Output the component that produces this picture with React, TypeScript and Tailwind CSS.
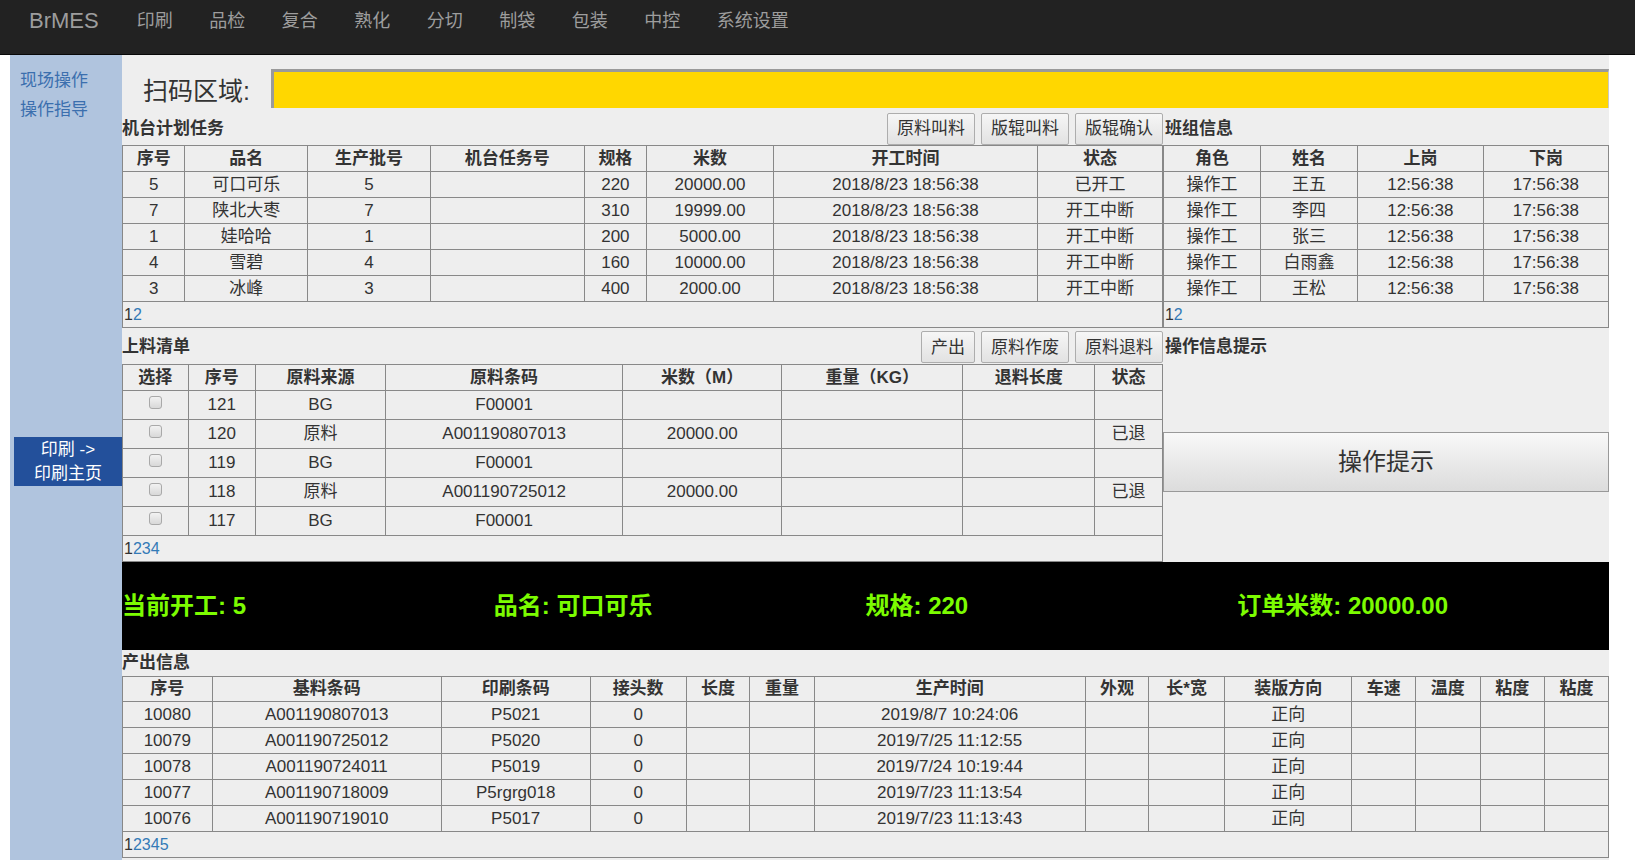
import React from "react";

const navItems = ["印刷", "品检", "复合", "熟化", "分切", "制袋", "包装", "中控", "系统设置"];

const planCols = [
  { label: "序号", w: "w-[6%]" },
  { label: "品名", w: "w-[11.8%]" },
  { label: "生产批号", w: "w-[11.8%]" },
  { label: "机台任务号", w: "w-[14.8%]" },
  { label: "规格", w: "w-[6%]" },
  { label: "米数", w: "w-[12.2%]" },
  { label: "开工时间", w: "w-[25.4%]" },
  { label: "状态", w: "w-[12%]" },
];

const planRows = [
  ["5", "可口可乐", "5", "", "220", "20000.00", "2018/8/23 18:56:38", "已开工"],
  ["7", "陕北大枣", "7", "", "310", "19999.00", "2018/8/23 18:56:38", "开工中断"],
  ["1", "娃哈哈", "1", "", "200", "5000.00", "2018/8/23 18:56:38", "开工中断"],
  ["4", "雪碧", "4", "", "160", "10000.00", "2018/8/23 18:56:38", "开工中断"],
  ["3", "冰峰", "3", "", "400", "2000.00", "2018/8/23 18:56:38", "开工中断"],
];

const teamCols = [
  { label: "角色", w: "w-[21.8%]" },
  { label: "姓名", w: "w-[21.8%]" },
  { label: "上岗", w: "w-[28.3%]" },
  { label: "下岗", w: "w-[28.1%]" },
];

const teamRows = [
  ["操作工", "王五", "12:56:38", "17:56:38"],
  ["操作工", "李四", "12:56:38", "17:56:38"],
  ["操作工", "张三", "12:56:38", "17:56:38"],
  ["操作工", "白雨鑫", "12:56:38", "17:56:38"],
  ["操作工", "王松", "12:56:38", "17:56:38"],
];

const feedCols = [
  { label: "选择", w: "w-[6.3%]" },
  { label: "序号", w: "w-[6.5%]" },
  { label: "原料来源", w: "w-[12.5%]" },
  { label: "原料条码", w: "w-[22.8%]" },
  { label: "米数（M）", w: "w-[15.3%]" },
  { label: "重量（KG）", w: "w-[17.4%]" },
  { label: "退料长度", w: "w-[12.7%]" },
  { label: "状态", w: "w-[6.5%]" },
];

const feedRows = [
  ["121", "BG", "F00001", "", "", "", ""],
  ["120", "原料", "A001190807013", "20000.00", "", "", "已退"],
  ["119", "BG", "F00001", "", "", "", ""],
  ["118", "原料", "A001190725012", "20000.00", "", "", "已退"],
  ["117", "BG", "F00001", "", "", "", ""],
];

const outCols = [
  { label: "序号", w: "w-[6.03%]" },
  { label: "基料条码", w: "w-[15.42%]" },
  { label: "印刷条码", w: "w-[10.02%]" },
  { label: "接头数", w: "w-[6.46%]" },
  { label: "长度", w: "w-[4.28%]" },
  { label: "重量", w: "w-[4.34%]" },
  { label: "生产时间", w: "w-[18.23%]" },
  { label: "外观", w: "w-[4.28%]" },
  { label: "长*宽", w: "w-[5.11%]" },
  { label: "装版方向", w: "w-[8.57%]" },
  { label: "车速", w: "w-[4.28%]" },
  { label: "温度", w: "w-[4.34%]" },
  { label: "粘度", w: "w-[4.35%]" },
  { label: "粘度", w: "w-[4.29%]" },
];

const outRows = [
  ["10080", "A001190807013", "P5021", "0", "", "", "2019/8/7 10:24:06", "", "", "正向", "", "", "", ""],
  ["10079", "A001190725012", "P5020", "0", "", "", "2019/7/25 11:12:55", "", "", "正向", "", "", "", ""],
  ["10078", "A001190724011", "P5019", "0", "", "", "2019/7/24 10:19:44", "", "", "正向", "", "", "", ""],
  ["10077", "A001190718009", "P5rgrg018", "0", "", "", "2019/7/23 11:13:54", "", "", "正向", "", "", "", ""],
  ["10076", "A001190719010", "P5017", "0", "", "", "2019/7/23 11:13:43", "", "", "正向", "", "", "", ""],
];

const thCls = "border border-[#888] p-0 h-[25px] text-center font-bold leading-[22px]";
const tdCls = "border border-[#888] p-0 text-center leading-[22px]";

function Pager({ pages, span }: { pages: number; span: number }) {
  return (
    <tr>
      <td colSpan={span} className="border border-[#888] p-0 pl-[1px] h-[26px] text-left text-[16px] leading-[22px]">
        {Array.from({ length: pages }, (_, i) => (
          <span key={i} className={i === 0 ? "text-[#333]" : "text-[#337ab7]"}>
            {i + 1}
          </span>
        ))}
      </td>
    </tr>
  );
}

function Btn({ children }: { children: React.ReactNode }) {
  return (
    <button className="h-[32px] px-[9px] text-[17px] text-[#333] border border-[#adadad] rounded-[2px] bg-gradient-to-b from-[#f6f6f6] to-[#e2e2e2] leading-none">
      {children}
    </button>
  );
}

function Checkbox() {
  return (
    <span className="inline-block align-middle mb-[6px] w-[13px] h-[13px] rounded-[3px] border border-[#a9a9a9] bg-gradient-to-b from-[#f2f2f2] to-[#d8d8d8]" />
  );
}

export default function App() {
  return (
    <div className="min-h-screen bg-white text-[#333] font-['Liberation_Sans','Noto_Sans_CJK_SC',sans-serif]">
      {/* top nav */}
      <nav className="h-[55px] bg-[#222] border-b border-[#080808] flex items-start pt-[9px]">
        <span className="pl-[29px] text-[22px] leading-[24px] text-[#9d9d9d]">BrMES</span>
        <div className="ml-[38px] flex gap-[36.5px]">
          {navItems.map((n) => (
            <span key={n} className="text-[18px] leading-[24px] text-[#9d9d9d]">
              {n}
            </span>
          ))}
        </div>
      </nav>

      <div className="flex">
        <div className="w-[10px] shrink-0" />
        {/* side menu */}
        <aside className="w-[112px] shrink-0 bg-[#b0c4de] pt-[11px]">
          <div className="pl-[10px] text-[17px] leading-[29px] text-[#3b6fae]">
            <div>现场操作</div>
            <div>操作指导</div>
          </div>
          <div className="mt-[313px] ml-[4px] h-[49px] bg-[#23509b] text-white text-[17px] leading-[24px] text-center flex flex-col justify-center">
            <div>印刷 -&gt;</div>
            <div>印刷主页</div>
          </div>
        </aside>

        <main className="w-[1487px] shrink-0 bg-[#eee]">
          {/* scan bar */}
          <div className="flex items-center pt-[14px] pl-[21px]">
            <span className="w-[128px] shrink-0 text-[25px] leading-[30px] text-[#333] pt-[4px]">扫码区域:</span>
            <div className="flex-1 h-[39px] bg-[#ffd700] border-t-[3px] border-l-[3px] border-t-[#9a9a9a] border-l-[#9a9a9a] border-r border-r-[#c8c8c8]" />
          </div>

          {/* plan + team */}
          <div className="flex mt-[4px]">
            <section className="w-[70%]">
              <div className="h-[33px] flex items-center justify-between">
                <h2 className="text-[17px] font-bold">机台计划任务</h2>
                <div className="flex gap-[6px]">
                  <Btn>原料叫料</Btn>
                  <Btn>版辊叫料</Btn>
                  <Btn>版辊确认</Btn>
                </div>
              </div>
              <table className="w-full table-fixed border-collapse text-[17px]">
                <thead>
                  <tr>
                    {planCols.map((c, i) => (
                      <th key={i} className={`${thCls} h-[26px] ${c.w}`}>
                        {c.label}
                      </th>
                    ))}
                  </tr>
                </thead>
                <tbody>
                  {planRows.map((r, i) => (
                    <tr key={i}>
                      {r.map((v, j) => (
                        <td key={j} className={`${tdCls} h-[26px]`}>
                          {v}
                        </td>
                      ))}
                    </tr>
                  ))}
                  <Pager pages={2} span={8} />
                </tbody>
              </table>
            </section>
            <section className="w-[30%]">
              <div className="h-[33px] flex items-center pl-[2px]">
                <h2 className="text-[17px] font-bold">班组信息</h2>
              </div>
              <table className="w-full table-fixed border-collapse text-[17px]">
                <thead>
                  <tr>
                    {teamCols.map((c, i) => (
                      <th key={i} className={`${thCls} h-[26px] ${c.w}`}>
                        {c.label}
                      </th>
                    ))}
                  </tr>
                </thead>
                <tbody>
                  {teamRows.map((r, i) => (
                    <tr key={i}>
                      {r.map((v, j) => (
                        <td key={j} className={`${tdCls} h-[26px]`}>
                          {v}
                        </td>
                      ))}
                    </tr>
                  ))}
                  <Pager pages={2} span={4} />
                </tbody>
              </table>
            </section>
          </div>

          {/* feed list + hints */}
          <div className="flex">
            <section className="w-[70%]">
              <div className="h-[36px] pt-[2px] flex items-center justify-between">
                <h2 className="text-[17px] font-bold">上料清单</h2>
                <div className="flex gap-[6px]">
                  <Btn>产出</Btn>
                  <Btn>原料作废</Btn>
                  <Btn>原料退料</Btn>
                </div>
              </div>
              <table className="w-full table-fixed border-collapse text-[17px]">
                <thead>
                  <tr>
                    {feedCols.map((c, i) => (
                      <th key={i} className={`${thCls} h-[26px] ${c.w}`}>
                        {c.label}
                      </th>
                    ))}
                  </tr>
                </thead>
                <tbody>
                  {feedRows.map((r, i) => (
                    <tr key={i}>
                      <td className={`${tdCls} h-[29px]`}>
                        <Checkbox />
                      </td>
                      {r.map((v, j) => (
                        <td key={j} className={`${tdCls} h-[29px]`}>
                          {v}
                        </td>
                      ))}
                    </tr>
                  ))}
                  <tr>
                    <td colSpan={8} className="border border-[#888] p-0 pl-[1px] h-[26px] text-left text-[16px] leading-[22px]">
                      <span className="text-[#333]">1</span>
                      <span className="text-[#337ab7]">234</span>
                    </td>
                  </tr>
                </tbody>
              </table>
            </section>
            <section className="w-[30%]">
              <div className="h-[36px] pt-[2px] flex items-center pl-[2px]">
                <h2 className="text-[17px] font-bold">操作信息提示</h2>
              </div>
              <button className="mt-[68px] w-full h-[60px] border border-[#999] bg-gradient-to-b from-[#f8f8f8] to-[#dcdcdc] text-[24px] text-[#333]">
                操作提示
              </button>
            </section>
          </div>

          {/* current job banner */}
          <div className="h-[88px] bg-black flex items-center">
            {["当前开工: 5", "品名: 可口可乐", "规格: 220", "订单米数: 20000.00"].map((t) => (
              <div key={t} className="w-1/4 text-[24px] font-bold text-[#7cfc00]">
                {t}
              </div>
            ))}
          </div>

          {/* output */}
          <section>
            <div className="h-[26px] flex items-center">
              <h2 className="text-[17px] font-bold">产出信息</h2>
            </div>
            <table className="w-full table-fixed border-collapse text-[17px]">
              <thead>
                <tr>
                  {outCols.map((c, i) => (
                    <th key={i} className={`${thCls} ${c.w}`}>
                      {c.label}
                    </th>
                  ))}
                </tr>
              </thead>
              <tbody>
                {outRows.map((r, i) => (
                  <tr key={i}>
                    {r.map((v, j) => (
                      <td key={j} className={`${tdCls} h-[26px]`}>
                        {v}
                      </td>
                    ))}
                  </tr>
                ))}
                <Pager pages={5} span={14} />
              </tbody>
            </table>
            <div className="h-[20px]" />
          </section>
        </main>
      </div>
    </div>
  );
}
